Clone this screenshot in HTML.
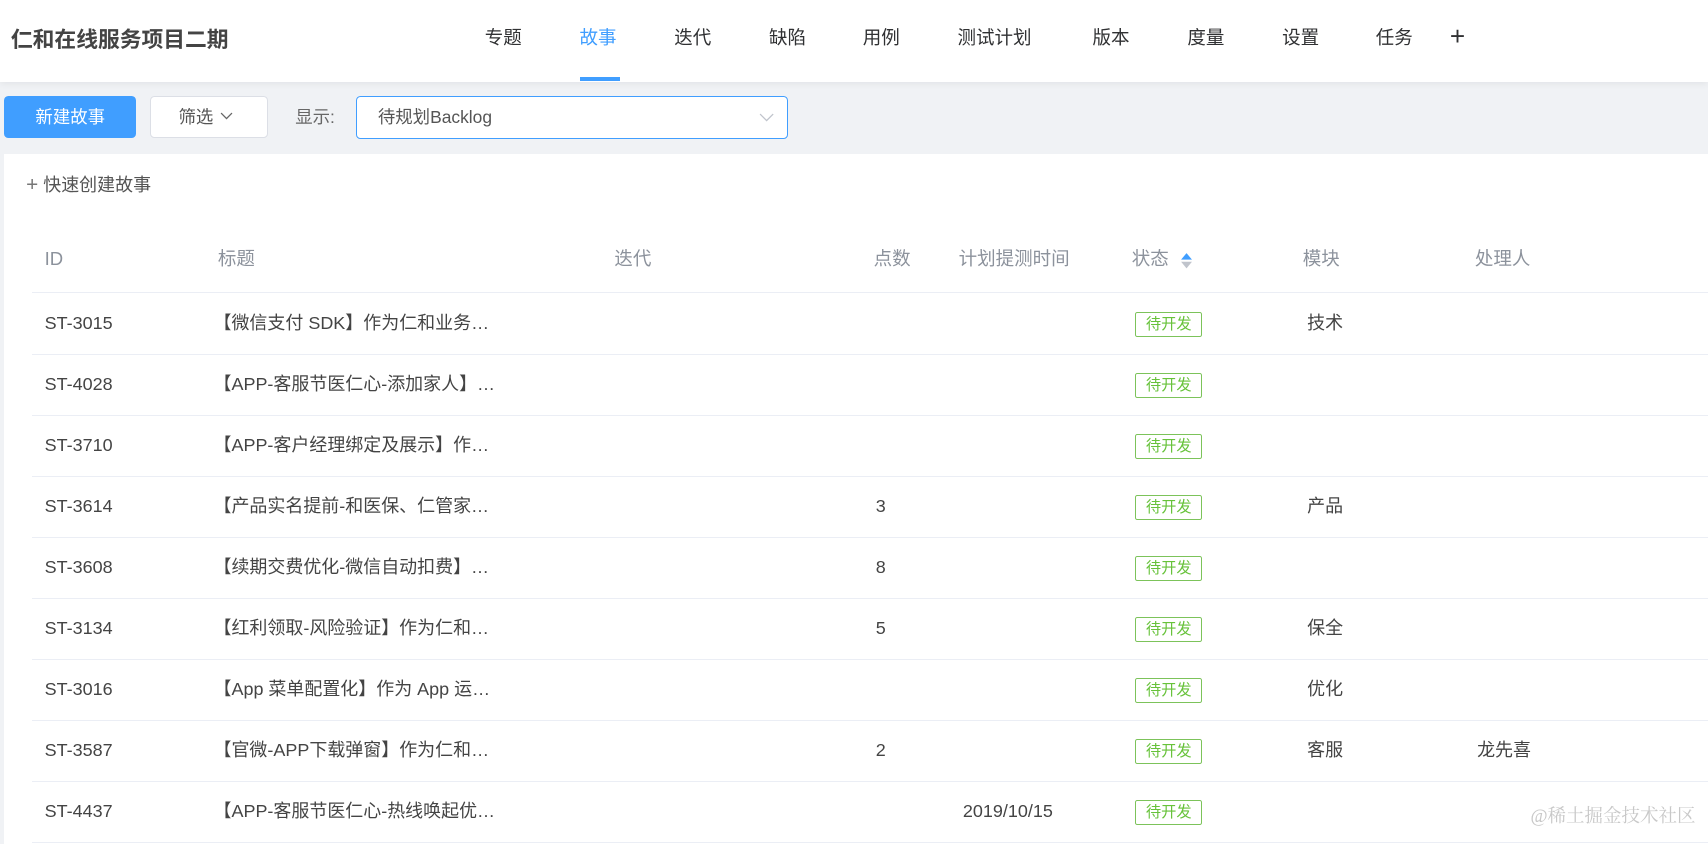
<!DOCTYPE html>
<html><head><meta charset="utf-8"><style>
html,body{margin:0;padding:0;overflow:hidden;background:#fff}
body{width:1708px;height:844px}
#w{position:relative;width:1568px;height:775px;zoom:1.08929;font-family:"Liberation Sans","Noto Sans CJK SC",sans-serif;color:#333;background:#fff}
.a{position:absolute;white-space:nowrap;line-height:20px}
.nav{top:25px;font-size:17px;color:#303133}
.th{top:228px;font-size:17px;color:#8c929c}
.td{font-size:16.5px;color:#444}
.tag{position:absolute;left:1042px;width:60px;height:22px;border:1px solid #7cc35a;border-radius:2px;color:#67c23a;font-size:14px;text-align:center;line-height:22px;background:#fff}
.line{position:absolute;left:29px;right:0;height:1px;background:#ebeef5}
</style></head><body><div id="w">
<div class="a" style="left:0;top:0;width:1568px;height:75px;background:#fff;box-shadow:0 2px 6px rgba(0,0,0,.06);z-index:2"></div>
<div class="a" style="left:0;top:75px;width:1568px;height:66px;background:#f0f2f5"></div>
<div class="a" style="left:10px;top:27px;font-size:20px;font-weight:bold;color:#444;z-index:3">仁和在线服务项目二期</div>
<div style="position:relative;z-index:3">
<div class="a nav" style="left:445px">专题</div>
<div class="a nav" style="left:532px;color:#409eff">故事</div>
<div class="a" style="left:532px;top:71px;width:37px;height:3px;background:#409eff"></div>
<div class="a nav" style="left:619px">迭代</div>
<div class="a nav" style="left:706px">缺陷</div>
<div class="a nav" style="left:792px">用例</div>
<div class="a nav" style="left:879px">测试计划</div>
<div class="a nav" style="left:1003px">版本</div>
<div class="a nav" style="left:1090px">度量</div>
<div class="a nav" style="left:1177px">设置</div>
<div class="a nav" style="left:1263px">任务</div>
<div class="a nav" style="left:1331px;top:24px;font-size:24px;font-weight:300">+</div>
</div>
<div class="a" style="left:4px;top:88px;width:121px;height:39px;background:#409eff;border-radius:4px;color:#fff;font-size:16px;text-align:center;line-height:39px">新建故事</div>
<div class="a" style="left:138px;top:88px;width:106px;height:37px;background:#fff;border:1px solid #dcdfe6;border-radius:4px;font-size:16px;color:#555;line-height:37px;text-indent:25px">筛选 <svg width="12" height="8" viewBox="0 0 12 8" style="vertical-align:2px;margin-left:2px"><path d="M1 1l5 5 5-5" fill="none" stroke="#666" stroke-width="1.2"/></svg></div>
<div class="a" style="left:271px;top:98px;font-size:16px;color:#666">显示:</div>
<div class="a" style="left:327px;top:88px;width:395px;height:38px;background:#fff;border:1px solid #409eff;border-radius:4px;font-size:16px;color:#555;line-height:38px;text-indent:19px">待规划Backlog<svg width="14" height="9" viewBox="0 0 14 9" style="position:absolute;right:12px;top:15px"><path d="M1 1l6 6 6-6" fill="none" stroke="#c0c4cc" stroke-width="1.2"/></svg></div>
<div class="a" style="left:0;top:140px;width:4px;height:635px;background:#f0f2f5"></div>
<div class="a" style="left:24px;top:160px;font-size:16.5px;color:#555"><span style="font-size:19px;font-weight:300;color:#777">+</span> 快速创建故事</div>
<div class="a th" style="left:41px">ID</div>
<div class="a th" style="left:200px">标题</div>
<div class="a th" style="left:564px">迭代</div>
<div class="a th" style="left:802px">点数</div>
<div class="a th" style="left:880px">计划提测时间</div>
<div class="a th" style="left:1039px">状态</div>
<svg class="a" style="left:1083px;top:231px" width="12" height="16" viewBox="0 0 12 16"><path d="M6 1l5 6H1z" fill="#409eff"/><path d="M6 15l5-6H1z" fill="#c0c4cc"/></svg>
<div class="a th" style="left:1196px">模块</div>
<div class="a th" style="left:1354px">处理人</div>
<div class="line" style="top:268px"></div>
<div class="line" style="top:325px"></div><div class="line" style="top:381px"></div><div class="line" style="top:437px"></div><div class="line" style="top:493px"></div><div class="line" style="top:549px"></div><div class="line" style="top:605px"></div><div class="line" style="top:661px"></div><div class="line" style="top:717px"></div><div class="line" style="top:773px"></div>

<div class="a td" style="left:41px;top:287px">ST-3015</div><div class="a td" style="left:196px;top:287px">【微信支付 SDK】作为仁和业务…</div><div class="tag" style="top:286px">待开发</div><div class="a td" style="left:1200px;top:287px">技术</div>
<div class="a td" style="left:41px;top:343px">ST-4028</div><div class="a td" style="left:196px;top:343px">【APP-客服节医仁心-添加家人】…</div><div class="tag" style="top:342px">待开发</div>
<div class="a td" style="left:41px;top:399px">ST-3710</div><div class="a td" style="left:196px;top:399px">【APP-客户经理绑定及展示】作…</div><div class="tag" style="top:398px">待开发</div>
<div class="a td" style="left:41px;top:455px">ST-3614</div><div class="a td" style="left:196px;top:455px">【产品实名提前-和医保、仁管家…</div><div class="a td" style="left:804px;top:455px">3</div><div class="tag" style="top:454px">待开发</div><div class="a td" style="left:1200px;top:455px">产品</div>
<div class="a td" style="left:41px;top:511px">ST-3608</div><div class="a td" style="left:196px;top:511px">【续期交费优化-微信自动扣费】…</div><div class="a td" style="left:804px;top:511px">8</div><div class="tag" style="top:510px">待开发</div>
<div class="a td" style="left:41px;top:567px">ST-3134</div><div class="a td" style="left:196px;top:567px">【红利领取-风险验证】作为仁和…</div><div class="a td" style="left:804px;top:567px">5</div><div class="tag" style="top:566px">待开发</div><div class="a td" style="left:1200px;top:567px">保全</div>
<div class="a td" style="left:41px;top:623px">ST-3016</div><div class="a td" style="left:196px;top:623px">【App 菜单配置化】作为 App 运…</div><div class="tag" style="top:622px">待开发</div><div class="a td" style="left:1200px;top:623px">优化</div>
<div class="a td" style="left:41px;top:679px">ST-3587</div><div class="a td" style="left:196px;top:679px">【官微-APP下载弹窗】作为仁和…</div><div class="a td" style="left:804px;top:679px">2</div><div class="tag" style="top:678px">待开发</div><div class="a td" style="left:1200px;top:679px">客服</div><div class="a td" style="left:1356px;top:679px">龙先喜</div>
<div class="a td" style="left:41px;top:735px">ST-4437</div><div class="a td" style="left:196px;top:735px">【APP-客服节医仁心-热线唤起优…</div><div class="a td" style="left:884px;top:735px">2019/10/15</div><div class="tag" style="top:734px">待开发</div>
<div class="a" style="left:1405px;top:741px;font-size:17px;color:#c8c8c8;font-family:'Liberation Serif','Noto Serif CJK SC',serif">@稀土掘金技术社区</div>
</div></body></html>
